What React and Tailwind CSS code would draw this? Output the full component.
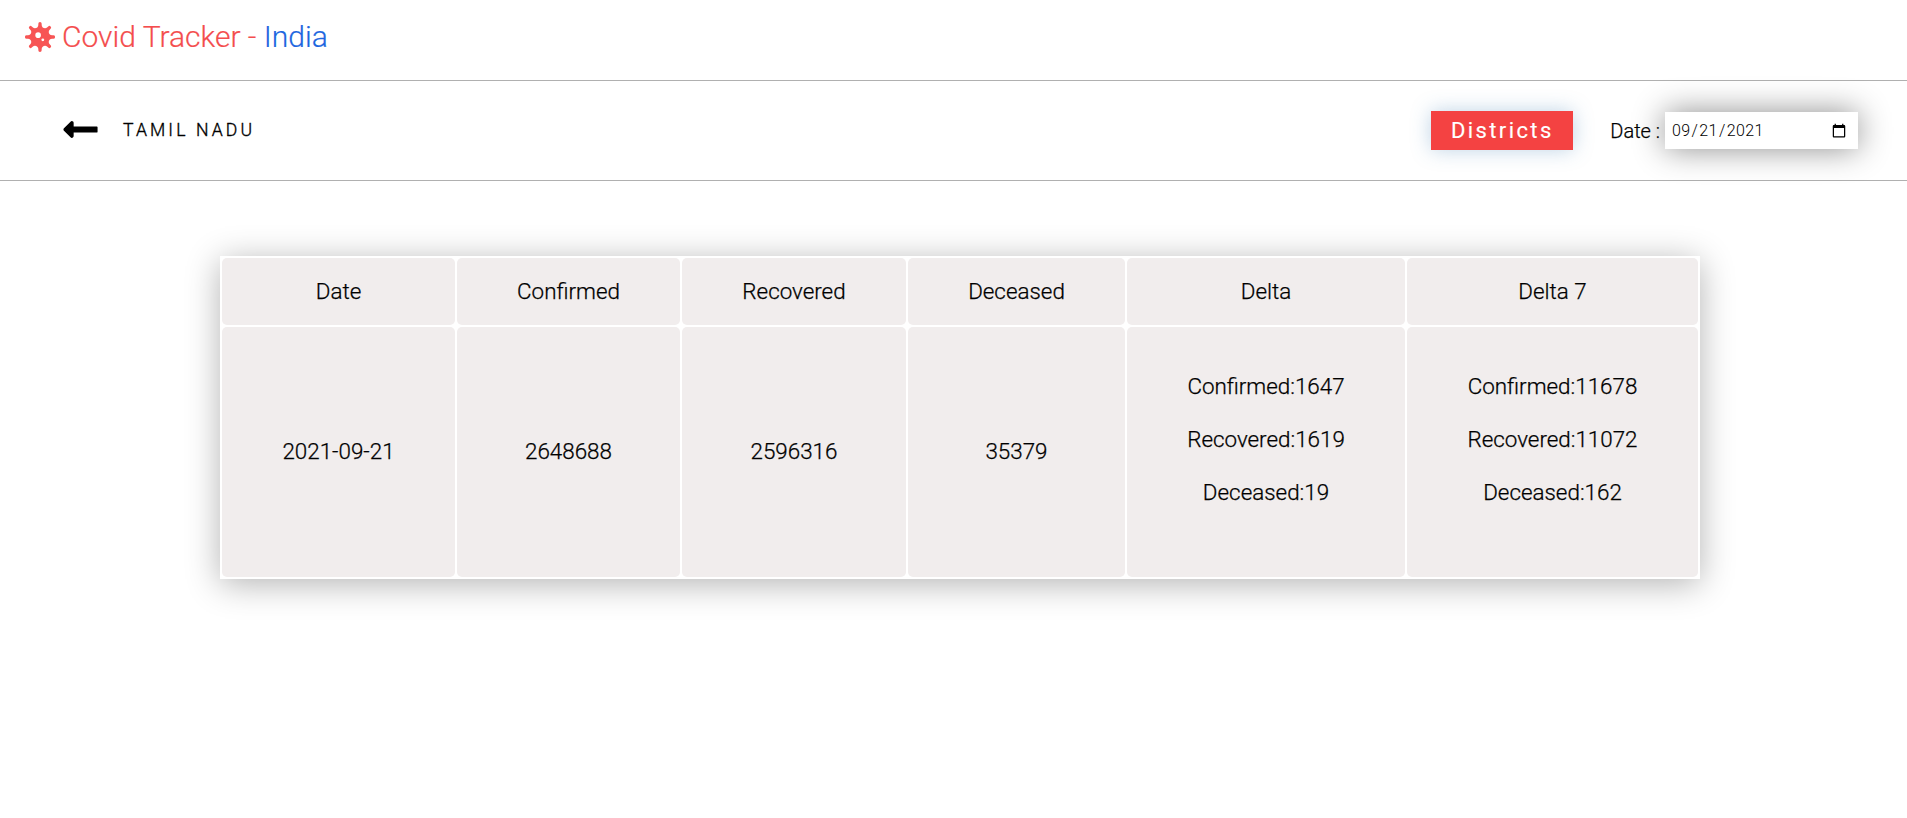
import { FaVirus, FaLongArrowAltLeft } from "react-icons/fa";

const headers = ["Date", "Confirmed", "Recovered", "Deceased", "Delta", "Delta 7"];

function Cell({ children }) {
  return <td className="rounded-[5px] bg-[#f1eded] p-0 text-center align-middle">{children}</td>;
}

function DeltaList({ confirmed, recovered, deceased }) {
  return (
    <div className="pb-[6px]">
      <p className="mb-[19.4px]">Confirmed:{confirmed}</p>
      <p className="mb-[19.4px]">Recovered:{recovered}</p>
      <p className="mb-[19.4px]">Deceased:{deceased}</p>
    </div>
  );
}

export default function App() {
  return (
    <div className="min-h-[818px] bg-white text-black font-['Roboto',sans-serif]">
      <header className="flex h-[81px] items-center border-b border-[#b0b0b0] pb-[7px] pl-[25px]">
        <FaVirus className="text-[30px] text-[#f75555]" />
        <h1 className="ml-[7px] text-[30px] font-light text-[#f44d4d] [-webkit-text-stroke:0.2px]">
          Covid Tracker - <span className="text-[#1d66e0]">India</span>
        </h1>
      </header>

      <div className="flex h-[100px] items-center justify-between border-b border-[#b0b0b0] pl-[61px] pr-[49px]">
        <div className="flex items-center">
          <FaLongArrowAltLeft className="mb-[3px] text-[39px]" />
          <span className="ml-[23px] text-[17.6px] font-light tracking-[3.1px] [-webkit-text-stroke:0.35px]">TAMIL NADU</span>
        </div>
        <div className="flex items-center">
          <button className="flex h-[39px] w-[142px] items-center justify-center bg-[#f44242] text-[22px] tracking-[2.4px] text-white shadow-[0_0_20px_rgba(70,130,180,0.35)] [-webkit-text-stroke:0.15px]">
            Districts
          </button>
          <label className="ml-[37px] text-[20px] font-light [-webkit-text-stroke:0.25px]">Date :</label>
          <input
            type="date"
            defaultValue="2021-09-21"
            className="ml-[5px] h-[37px] w-[193px] bg-white pl-[6px] pr-[9px] text-[16px] font-light tracking-[0.4px] shadow-[0_0_32px_rgba(0,0,0,0.45)]"
          />
        </div>
      </div>

      <div className="ml-[220px] mt-[75px] w-[1480px] bg-white shadow-[0_5px_32px_rgba(0,0,0,0.3)]">
        <table className="w-full table-fixed border-separate border-spacing-[2px] text-[22.4px] font-light [-webkit-text-stroke:0.25px]">
          <thead>
            <tr className="h-[67px]">
              {headers.map((h, i) => (
                <th
                  key={h}
                  className={`rounded-[5px] bg-[#f1eded] p-0 text-center font-light ${
                    ["w-[233px]", "w-[223px]", "w-[224px]", "w-[217px]", "w-[278px]", ""][i]
                  }`}
                >
                  {h}
                </th>
              ))}
            </tr>
          </thead>
          <tbody>
            <tr className="h-[250px]">
              <Cell>2021-09-21</Cell>
              <Cell>2648688</Cell>
              <Cell>2596316</Cell>
              <Cell>35379</Cell>
              <Cell>
                <DeltaList confirmed={1647} recovered={1619} deceased={19} />
              </Cell>
              <Cell>
                <DeltaList confirmed={11678} recovered={11072} deceased={162} />
              </Cell>
            </tr>
          </tbody>
        </table>
      </div>
    </div>
  );
}
